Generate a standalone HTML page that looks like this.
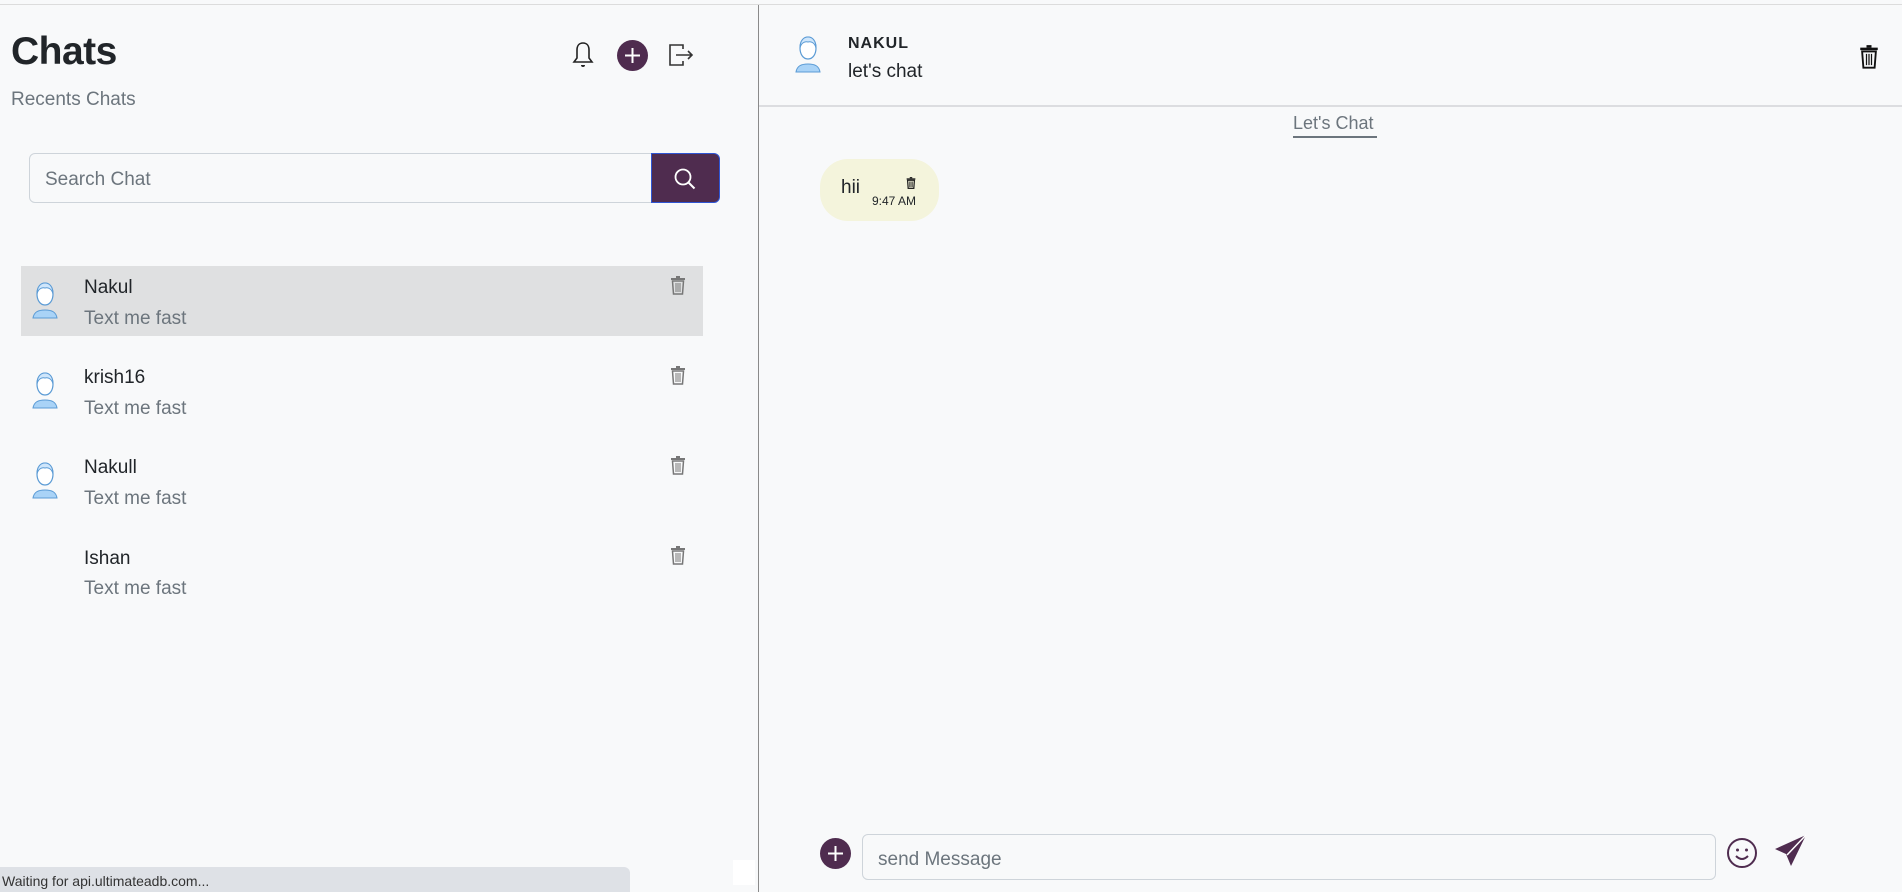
<!DOCTYPE html>
<html><head><meta charset="utf-8"><style>
*{box-sizing:border-box;margin:0;padding:0}
body{width:1902px;height:892px;background:#f8f9fa;font-family:"Liberation Sans",sans-serif;position:relative;overflow:hidden;color:#212529}
.a{position:absolute}
.topline{left:0;top:4px;width:1902px;height:1px;background:#dcdcdc}
.vline{left:758px;top:5px;width:1px;height:887px;background:#8a8a8a}
.name{font-size:19px;color:#212529}
.sub{font-size:19px;color:#6c757d}
</style></head><body>
<div class="a topline"></div>
<div class="a vline"></div>

<div class="a" style="left:11px;top:30px;font-size:39px;font-weight:bold;color:#212529;letter-spacing:-0.5px">Chats</div>
<div class="a" style="left:11px;top:89px;font-size:19px;color:#6c757d">Recents Chats</div>

<svg class="a" style="left:571px;top:40px" width="24" height="30" viewBox="0 0 24 30"><path d="M12 3c-4 0-6 3-6 7v8l-3 4h18l-3-4v-8c0-4-2-7-6-7z" fill="none" stroke="#222" stroke-width="1.6"/><path d="M10 25a2 2 0 0 0 4 0" fill="#222"/></svg>
<div class="a" style="left:617px;top:40px;width:31px;height:31px;border-radius:50%;background:#4f2c4f"></div>
<svg class="a" style="left:617px;top:40px" width="31" height="31"><path d="M15.5 8v15M8 15.5h15" stroke="#fff" stroke-width="2"/></svg>
<svg class="a" style="left:667px;top:42px" width="28" height="26" viewBox="0 0 28 26"><path d="M16 7V3H3v20h13v-4" fill="none" stroke="#333" stroke-width="1.6"/><path d="M9 13h16M21 9l4 4-4 4" fill="none" stroke="#333" stroke-width="1.6"/></svg>

<div class="a" style="left:29px;top:153px;width:623px;height:50px;border:1px solid #ced4da;border-radius:6px 0 0 6px;background:#f8f9fa"></div>
<div class="a" style="left:45px;top:169px;font-size:19px;color:#6c757d">Search Chat</div>
<div class="a" style="left:651px;top:153px;width:69px;height:50px;background:#4f2c4f;border:1px solid #2f55d4;border-radius:0 6px 6px 0"></div>
<svg class="a" style="left:672px;top:166px" width="26" height="26"><circle cx="11" cy="11" r="7.5" fill="none" stroke="#fff" stroke-width="1.8"/><path d="M16.5 16.5l6 6" stroke="#fff" stroke-width="2"/></svg>

<div class="a" style="left:21px;top:266px;width:682px;height:70px;background:#dfe0e1"></div>

<svg width="0" height="0" style="position:absolute"><defs><g id="av"><path d="M4 38c1-6 5-8 12-8s11 2 12 8z" fill="#a9d3f7" stroke="#5b9bd5" stroke-width="1"/><path d="M8 14c0-7 4-11 8-11s8 4 8 11c0 6-3 11-8 11s-8-5-8-11z" fill="#fff" stroke="#5b9bd5" stroke-width="1.2"/><path d="M8 14c1-5 5-7 8-6 3-1 7 1 8 6 0-8-4-11-8-11S8 6 8 14z" fill="#cfe6fb" stroke="#5b9bd5" stroke-width="1"/></g>
<g id="tr"><rect x="1" y="2" width="14" height="2" fill="#777"/><rect x="6" y="0" width="4" height="2" fill="#777"/><path d="M2.5 5h11l-1 13h-9z" fill="none" stroke="#777" stroke-width="1.5"/><path d="M6 7v9M8 7v9M10 7v9" stroke="#777" stroke-width="1"/></g></defs></svg>

<svg class="a" style="left:29px;top:280px" width="32" height="40"><use href="#av"/></svg>
<div class="a name" style="left:84px;top:277px">Nakul</div>
<div class="a sub" style="left:84px;top:308px">Text me fast</div>
<svg class="a" style="left:670px;top:276px" width="16" height="19"><use href="#tr"/></svg>

<svg class="a" style="left:29px;top:370px" width="32" height="40"><use href="#av"/></svg>
<div class="a name" style="left:84px;top:367px">krish16</div>
<div class="a sub" style="left:84px;top:398px">Text me fast</div>
<svg class="a" style="left:670px;top:366px" width="16" height="19"><use href="#tr"/></svg>

<svg class="a" style="left:29px;top:460px" width="32" height="40"><use href="#av"/></svg>
<div class="a name" style="left:84px;top:457px">Nakull</div>
<div class="a sub" style="left:84px;top:488px">Text me fast</div>
<svg class="a" style="left:670px;top:456px" width="16" height="19"><use href="#tr"/></svg>

<div class="a name" style="left:84px;top:548px">Ishan</div>
<div class="a sub" style="left:84px;top:578px">Text me fast</div>
<svg class="a" style="left:670px;top:546px" width="16" height="19"><use href="#tr"/></svg>

<svg class="a" style="left:792px;top:34px" width="32" height="40"><use href="#av"/></svg>
<div class="a" style="left:848px;top:35px;font-size:16px;font-weight:bold;letter-spacing:1px">NAKUL</div>
<div class="a" style="left:848px;top:61px;font-size:19px">let's chat</div>
<svg class="a" style="left:1859px;top:44px" width="20" height="26" viewBox="0 0 16 19"><rect x="1" y="2" width="14" height="2" fill="#111"/><rect x="6" y="0" width="4" height="2" fill="#111"/><path d="M2.5 5h11l-1 13h-9z" fill="none" stroke="#111" stroke-width="1.5"/><path d="M6 7v9M8 7v9M10 7v9" stroke="#111" stroke-width="1"/></svg>
<div class="a" style="left:759px;top:105px;width:1143px;height:2px;background:#dcdde0"></div>

<div class="a" style="left:1293px;top:113px;font-size:18px;color:#6c757d">Let's Chat</div>
<div class="a" style="left:1293px;top:136px;width:84px;height:2px;background:#6c757d"></div>

<div class="a" style="left:820px;top:159px;width:119px;height:62px;border-radius:28px;background:#f4f4dc"></div>
<div class="a" style="left:841px;top:177px;font-size:19px">hii</div>
<svg class="a" style="left:906px;top:177px" width="10" height="12" viewBox="0 0 16 19"><rect x="1" y="2" width="14" height="2" fill="#222"/><rect x="6" y="0" width="4" height="2" fill="#222"/><path d="M2.5 5h11l-1 13h-9z" fill="none" stroke="#222" stroke-width="2"/><path d="M6 7v9M8 7v9M10 7v9" stroke="#222" stroke-width="1.2"/></svg>
<div class="a" style="left:872px;top:194px;font-size:12px">9:47 AM</div>

<div class="a" style="left:820px;top:838px;width:31px;height:31px;border-radius:50%;background:#4f2c4f"></div>
<svg class="a" style="left:820px;top:838px" width="31" height="31"><path d="M15.5 8v15M8 15.5h15" stroke="#fff" stroke-width="2"/></svg>
<div class="a" style="left:862px;top:834px;width:854px;height:46px;border:1px solid #ced4da;border-radius:6px;background:#f8f9fa"></div>
<div class="a" style="left:878px;top:849px;font-size:19px;color:#6c757d">send Message</div>
<svg class="a" style="left:1726px;top:837px" width="32" height="32"><circle cx="16" cy="16" r="14" fill="none" stroke="#4f2c4f" stroke-width="2"/><circle cx="11.5" cy="13" r="1.5" fill="#4f2c4f"/><circle cx="20.5" cy="13" r="1.5" fill="#4f2c4f"/><path d="M10 19q6 6 12 0" fill="none" stroke="#4f2c4f" stroke-width="2"/></svg>
<svg class="a" style="left:1774px;top:834px" width="34" height="34" viewBox="0 0 34 34"><path d="M32 1L1 15l11 5 5 12z" fill="#4f2c4f"/><path d="M32 1L13 21" stroke="#fff" stroke-width="1.5"/></svg>

<div class="a" style="left:0;top:867px;width:630px;height:25px;background:#dee1e6;border-radius:0 6px 0 0"></div>
<div class="a" style="left:2px;top:873px;font-size:14px;color:#333">Waiting for api.ultimateadb.com...</div>
<div class="a" style="left:733px;top:860px;width:22px;height:25px;background:#fff"></div>
</body></html>
